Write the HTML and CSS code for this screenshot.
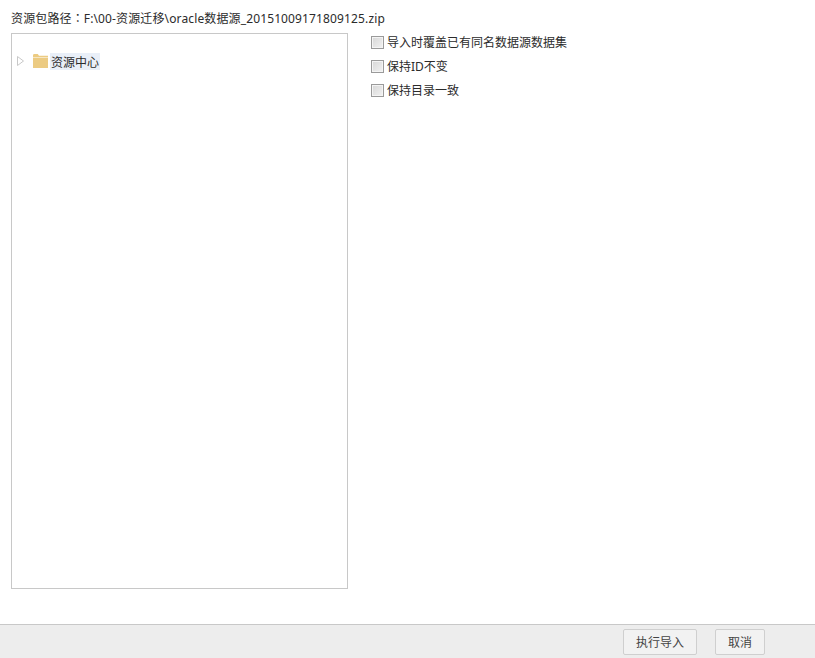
FILE: index.html
```html
<!DOCTYPE html>
<html lang="zh">
<head>
<meta charset="utf-8">
<title>资源导入</title>
<link rel="stylesheet" href="styles.css">
</head>
<body>
<div class="page">
  <main class="content">
    <div class="path">资源包路径<span class="colon" lang="zh-Hant">：</span>F:\00-资源迁移\oracle数据源_20151009171809125.zip</div>
    <div class="columns">
      <div class="tree">
        <div class="node">
          <svg class="arrow" width="8" height="10" viewBox="0 0 8 10"><path d="M.5.5v9l6-4.5z" fill="#fff" stroke="#c8c8c8"/></svg>
          <svg class="folder" width="15" height="14" viewBox="0 0 15 14"><path d="M0 1.5C0 .7.5 0 1.2 0h3.6L6 1.8h9V14H0z" fill="#eccb82"/><path d="M0 3h15v1H0z" fill="#f6e6c3"/></svg>
          <span class="label">资源中心</span>
        </div>
      </div>
      <div class="options">
        <label class="option"><span class="check"></span>导入时覆盖已有同名数据源数据集</label>
        <label class="option"><span class="check"></span>保持ID不变</label>
        <label class="option"><span class="check"></span>保持目录一致</label>
      </div>
    </div>
  </main>
  <footer class="footer">
    <button class="btn btn-run">执行导入</button>
    <button class="btn btn-cancel">取消</button>
  </footer>
</div>
</body>
</html>
```
FILE: styles.css
```css
*, *::before, *::after {
  box-sizing: border-box;
}
html, body {
  margin: 0;
  padding: 0;
  background: #fff;
}
body {
  font-family: "Noto Sans", "Noto Sans CJK SC", sans-serif;
  font-size: 12px;
  color: #2b2b2b;
}
.page {
  width: 815px;
  height: 658px;
  display: flex;
  flex-direction: column;
  overflow: hidden;
}
.content {
  flex: 1;
  padding: 10px 11px 0;
}
.path {
  height: 23px;
  line-height: 16px;
  letter-spacing: 0.13px;
}
.colon {
  font-family: "Noto Sans CJK TC", sans-serif;
}
.columns {
  display: flex;
}
.tree {
  width: 337px;
  height: 556px;
  border: 1px solid #c8c8c8;
  padding-top: 19px;
}
.node {
  display: flex;
  align-items: flex-start;
  height: 18px;
  padding-left: 5px;
}
.arrow {
  margin-right: 8px;
  margin-top: 3px;
}
.folder {
  margin-top: 1px;
  margin-right: 2px;
}
.label {
  background: #e9eff8;
  height: 17px;
  line-height: 19px;
  padding-left: 1px;
  padding-right: 1px;
}
.options {
  padding-left: 23px;
  display: flex;
  flex-direction: column;
  gap: 6px;
}
.option {
  display: flex;
  align-items: center;
  height: 18px;
}
.check {
  width: 13px;
  height: 13px;
  border: 1px solid #9a9a9a;
  background: linear-gradient(135deg, #d6d6d6, #f2f2f2);
  box-shadow: inset 0 0 0 1px #f4f4f4;
  margin-right: 3px;
}
.footer {
  height: 34px;
  flex: none;
  background: #ededed;
  border-top: 1px solid #c8c8c8;
  display: flex;
  justify-content: flex-end;
  align-items: flex-start;
  padding: 4px 50px 0 0;
  gap: 18px;
}
.btn {
  height: 26px;
  font: inherit;
  color: #444;
  background: #f2f2f2;
  border: 1px solid #cfcfcf;
  border-radius: 2px;
  padding: 0;
}
.btn-run {
  width: 74px;
}
.btn-cancel {
  width: 50px;
}
```
